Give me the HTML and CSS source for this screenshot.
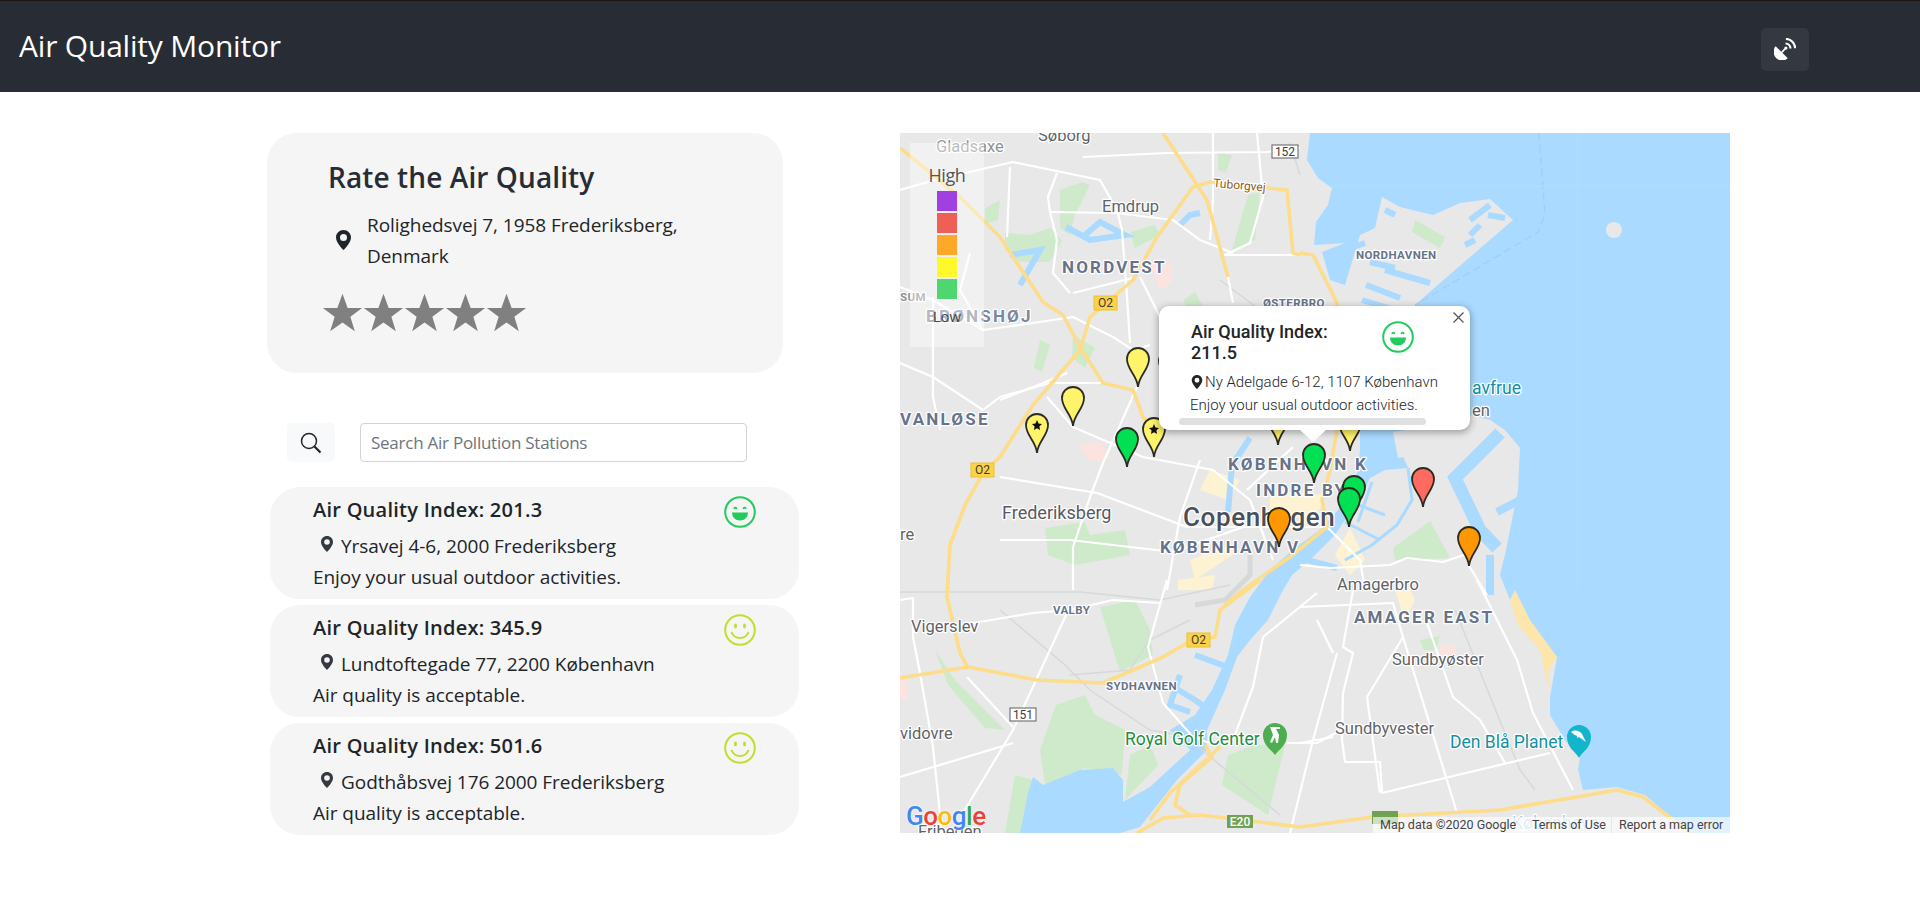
FILE: index.html
```html
<!DOCTYPE html>
<html lang="en">
<head>
    <meta charset="UTF-8">
    <title>Air Quality Monitor</title>
    <link rel="stylesheet" href="styles.css">
</head>
<body>
    <svg class="sprites" width="0" height="0">
        <defs>
            <symbol id="icon-pin" viewBox="0 0 12 16">
                <path fill-rule="evenodd" d="M6 0C2.7 0 0 2.6 0 5.9 0 9.6 4.4 14.300 6 16c1.600-1.700 6-6.400 6-10.100C12 2.600 9.300 0 6 0zm0 3.200a2.800 2.800 0 1 1 0 5.600 2.800 2.800 0 0 1 0-5.600z"/>
            </symbol>
            <symbol id="face-grin" viewBox="0 0 32 32">
                <circle cx="16" cy="16" r="14.800" fill="none" stroke="currentColor" stroke-width="2"/>
                <path d="M10 13c.4-1.800 2.400-1.800 2.800 0M19.200 13c.4-1.800 2.400-1.800 2.800 0" fill="none" stroke="currentColor" stroke-width="1.600"/>
                <path d="M8 16.500h16c0 4.800-3.500 8-8 8s-8-3.200-8-8z" fill="currentColor"/>
            </symbol>
            <symbol id="face-smile" viewBox="0 0 32 32">
                <circle cx="16" cy="16" r="14.800" fill="none" stroke="currentColor" stroke-width="2"/>
                <ellipse cx="11.500" cy="12" rx="1.500" ry="2.400" fill="currentColor"/>
                <ellipse cx="20.500" cy="12" rx="1.500" ry="2.400" fill="currentColor"/>
                <path d="M7.500 18c1.500 4 4.500 6 8.500 6s7-2 8.500-6" fill="none" stroke="currentColor" stroke-width="2"/>
            </symbol>
            <path id="marker" d="M0 0C-1-12-11-17-11-28A11 11 0 1 1 11-28C11-17 1-12 0 0Z" stroke="#2b2b20" stroke-width="1.800"/>
            <polygon id="marker-star" points="0,-33 1.500,-29.500 5,-29 2.400,-26.500 3,-23 0,-24.800 -3,-23 -2.400,-26.500 -5,-29 -1.500,-29.500" fill="#111"/>
        </defs>
    </svg>

    <header class="navbar">
        <span class="brand">Air Quality Monitor</span>
        <button class="nav-btn" type="button">
            <svg width="22" height="22" viewBox="0 0 20 20">
                <path d="M1.500 7.500A7.800 7.800 0 0 0 12.500 18.500Z" fill="#fff"/>
                <path d="M7 13l3.500-3.500" stroke="#fff" stroke-width="1.500"/>
                <circle cx="10.800" cy="9.200" r="1.400" fill="#fff"/>
                <path d="M10.500 5A4.700 4.700 0 0 1 15 9.500M10.800.9A8.400 8.400 0 0 1 19.200 9.300" fill="none" stroke="#fff" stroke-width="2"/>
            </svg>
        </button>
    </header>

    <main class="page">
        <section class="side">
            <div class="rate-card">
                <h2>Rate the Air Quality</h2>
                <div class="rate-address">
                    <svg class="pin-lg"><use href="#icon-pin"/></svg>
                    <p>Rolighedsvej 7, 1958 Frederiksberg, Denmark</p>
                </div>
                <div class="stars">
                    <svg viewBox="0 0 24 24"><polygon points="12,1 15,9.300 23.500,9.300 16.600,14.500 19.200,23 12,17.800 4.800,23 7.400,14.500 .5,9.300 9,9.300"/></svg>
                    <svg viewBox="0 0 24 24"><polygon points="12,1 15,9.300 23.500,9.300 16.600,14.500 19.200,23 12,17.800 4.800,23 7.400,14.500 .5,9.300 9,9.300"/></svg>
                    <svg viewBox="0 0 24 24"><polygon points="12,1 15,9.300 23.500,9.300 16.600,14.500 19.200,23 12,17.800 4.800,23 7.400,14.500 .5,9.300 9,9.300"/></svg>
                    <svg viewBox="0 0 24 24"><polygon points="12,1 15,9.300 23.500,9.300 16.600,14.500 19.200,23 12,17.800 4.800,23 7.400,14.500 .5,9.300 9,9.300"/></svg>
                    <svg viewBox="0 0 24 24"><polygon points="12,1 15,9.300 23.500,9.300 16.600,14.500 19.200,23 12,17.800 4.800,23 7.400,14.500 .5,9.300 9,9.300"/></svg>
                </div>
            </div>

            <div class="search">
                <button class="search-btn" type="button">
                    <svg width="22" height="22" viewBox="0 0 22 22" fill="none" stroke="#212529">
                        <circle cx="9" cy="9" r="7.500" stroke-width="1.500"/>
                        <path d="M14.500 14.500l6 6" stroke-width="2.200"/>
                    </svg>
                </button>
                <input type="text" placeholder="Search Air Pollution Stations">
            </div>

            <div class="station">
                <div class="station-info">
                    <h3>Air Quality Index: 201.3</h3>
                    <div class="station-address"><svg class="pin-sm"><use href="#icon-pin"/></svg>Yrsavej 4-6, 2000 Frederiksberg</div>
                    <p>Enjoy your usual outdoor activities.</p>
                </div>
                <svg class="face good"><use href="#face-grin"/></svg>
            </div>
            <div class="station">
                <div class="station-info">
                    <h3>Air Quality Index: 345.9</h3>
                    <div class="station-address"><svg class="pin-sm"><use href="#icon-pin"/></svg>Lundtoftegade 77, 2200 København</div>
                    <p>Air quality is acceptable.</p>
                </div>
                <svg class="face ok"><use href="#face-smile"/></svg>
            </div>
            <div class="station">
                <div class="station-info">
                    <h3>Air Quality Index: 501.6</h3>
                    <div class="station-address"><svg class="pin-sm"><use href="#icon-pin"/></svg>Godthåbsvej 176 2000 Frederiksberg</div>
                    <p>Air quality is acceptable.</p>
                </div>
                <svg class="face ok"><use href="#face-smile"/></svg>
            </div>
        </section>

        <section class="map">
            <svg class="map-art" viewBox="900 133 830 700" width="830" height="700">
                <rect class="water" x="900" y="133" width="830" height="700"/>

                <!-- land -->
                <polygon class="land" points="900,133 1310,133 1307,160 1318,178 1332,188 1328,205 1316,222 1314,245 1345,243 1322,252 1330,280 1345,285 1360,235 1375,228 1382,197 1400,207 1433,215 1460,203 1490,199 1513,220 1440,283 1415,305 1400,330 1450,400 1470,415 1490,420 1505,430 1520,448 1518,490 1506,550 1500,575 1510,600 1530,625 1557,657 1550,697 1550,715 1565,740 1580,757 1578,770 1583,790 1617,787 1645,795 1690,833 900,833"/>
                <ellipse class="land" cx="1614" cy="230" rx="8" ry="8"/>

                <!-- parks -->
                <g class="park">
                    <polygon points="1005,233 1030,235 1050,228 1062,240 1050,262 1020,262 1005,250"/>
                    <polygon points="1060,190 1082,182 1090,185 1075,215 1070,235 1060,228"/>
                    <polygon points="1130,232 1155,225 1160,235 1135,248"/>
                    <polygon points="1183,300 1195,292 1205,310 1193,318"/>
                    <polygon points="1218,152 1232,155 1226,172 1218,170"/>
                    <polygon points="1248,195 1260,192 1255,240 1232,250"/>
                    <polygon points="985,208 1000,200 998,220 985,224"/>
                    <polygon points="1073,335 1095,348 1085,368 1072,358"/>
                    <polygon points="1040,340 1050,345 1042,372 1034,368"/>
                    <polygon points="1415,220 1445,237 1440,248 1412,232"/>
                    <polygon points="1045,528 1085,522 1090,535 1125,530 1130,555 1075,565 1048,555"/>
                    <polygon points="1100,607 1135,600 1150,630 1153,655 1120,672"/>
                    <polygon points="1056,705 1085,695 1095,715 1125,730 1122,775 1085,768 1045,785 1040,750"/>
                    <polygon points="1130,755 1150,745 1158,765 1125,800"/>
                    <polygon points="1015,775 1033,780 1025,833 1005,833"/>
                    <polygon points="1228,755 1255,745 1285,745 1268,815 1222,785"/>
                    <polygon points="1430,521 1450,558 1395,560 1393,548"/>
                    <polygon points="935,650 955,680 1005,730 985,728 948,685"/>
                    <polygon points="1420,640 1440,636 1436,650 1424,650"/>
                </g>

                <!-- hospital and built-up patches -->
                <g class="pink">
                    <polygon points="1150,265 1172,262 1172,282 1160,290"/>
                    <polygon points="1078,445 1100,440 1110,458 1090,462"/>
                    <polygon points="900,680 908,678 908,700 900,700"/>
                    <polygon points="1440,645 1455,645 1457,655 1440,655"/>
                </g>
                <g class="town">
                    <polygon points="1178,580 1215,575 1212,590 1178,590"/>
                    <polygon points="1210,470 1240,480 1228,500 1200,490"/>
                    <polygon points="1270,490 1325,495 1315,520 1270,515"/>
                    <polygon points="1190,560 1230,545 1240,550 1195,580"/>
                    <polygon points="1335,555 1350,528 1365,560 1350,575"/>
                    <polygon points="1240,340 1262,332 1264,345 1244,352"/>
                    <polygon points="1395,590 1405,580 1415,600 1405,620"/>
                </g>
                <polygon class="sand" points="1510,600 1515,590 1530,620 1557,657 1548,672 1550,690 1545,675 1540,650 1518,625"/>

                <!-- harbour and canals -->
                <polygon class="water" points="1360,425 1410,425 1396,440 1408,468 1385,470 1370,478 1360,500 1345,520 1335,535 1310,560 1292,575 1283,590 1268,620 1250,640 1237,657 1225,690 1207,730 1207,750 1177,780 1140,827 1120,833 1020,833 1028,793 1033,777 1043,785 1080,770 1113,768 1123,780 1123,802 1150,787 1190,750 1170,730 1195,715 1212,690 1228,655 1235,625 1250,597 1270,570 1295,548 1320,530 1338,510 1352,490 1358,470 1360,450"/>
                <polygon class="land" points="1393,432 1408,430 1410,456 1398,458"/>
                <g class="canal">
                    <path d="M1250 438L1232 465 1228 512"/>
                    <path d="M1307 560L1337 568"/>
                    <path d="M1170 685L1195 700 1212 712M1195 655L1230 668M1180 675L1170 705 1190 712"/>
                    <path d="M1066 227L1090 240 1125 235 1100 222 1085 235M1010 255L1040 250 1020 285"/>
                    <path d="M1200 213L1190 215 1180 225"/>
                </g>
                <path class="canal-thin" d="M1408 468L1412 500 1397 525 1372 545 1345 560M1345 500L1385 515M1372 482L1358 522M1345 522L1380 540"/>
                <path class="canal-wide" d="M1500 433L1455 478 1480 530 1497 548"/>
                <path class="canal-mid" d="M1530 495L1497 512M1490 555V595"/>
                <g class="dock">
                    <path d="M1385 210L1395 215M1370 262L1395 268M1385 270L1430 283M1366 285L1400 298M1362 300L1395 310M1470 220L1490 205M1470 235L1480 225M1465 245L1475 240M1488 215L1505 218M1345 250L1365 243"/>
                </g>
                <path class="lane" d="M1539 133L1545 215 1538 232 1415 305"/>
                <path class="grid" d="M1578 133V590M1330 186H1730"/>

                <!-- rail -->
                <g class="rail">
                    <path d="M900 592H1080L1160 600 1230 585M1000 610L1065 665 1090 690 1150 730 1190 737M1190 620L1150 640 1130 670 1070 675M1190 740L1280 815M1455 610L1520 770 1535 790M1290 143L1300 175M1220 280L1260 310 1300 300"/>
                    <path class="rail-wide" d="M1250 555L1250 575 1225 600 1195 605"/>
                </g>

                <!-- streets -->
                <g class="road">
                    <path d="M1083 157L1167 153 1267 152 1300 148"/>
                    <path d="M900 190L935 180 1013 162 1100 180 1117 210 1122 230 1127 297 1130 343"/>
                    <path d="M1010 167L1007 237"/>
                    <path d="M1050 212L1117 213 1173 220 1200 240 1233 253"/>
                    <path d="M1057 173L1048 197 1050 212 1057 240 1053 273 1070 293"/>
                    <path d="M1073 293L1133 278"/>
                    <path d="M900 287L933 300 983 330 1033 323 1073 317 1113 337 1133 350 1150 345"/>
                    <path d="M900 363L933 377 983 410 1000 397 1050 383 1107 383"/>
                    <path d="M933 297V397L940 430"/>
                    <path d="M970 253L960 290 983 330"/>
                    <path d="M1140 277L1160 317 1163 343"/>
                    <path d="M1213 133V200L1210 240"/>
                    <path d="M1257 133L1263 197 1250 243 1225 255"/>
                    <path d="M1223 255H1300"/>
                    <path d="M1228 277L1233 303"/>
                    <path d="M1000 400L1043 383 1067 373"/>
                    <path d="M1047 397L1073 427 1143 457 1213 470 1250 500 1273 560"/>
                    <path d="M1137 387L1103 463 1090 497 1073 547V590"/>
                    <path d="M1000 477L1097 493 1187 527 1243 527"/>
                    <path d="M1000 540H1070L1173 552 1243 527 1327 527 1360 560 1365 590"/>
                    <path d="M1300 565L1330 568 1390 565 1407 558 1443 562 1470 553"/>
                    <path d="M1469 566L1487 595"/>
                    <path d="M1200 460L1180 517 1167 590"/>
                    <path d="M1293 447L1247 490"/>
                    <path d="M900 600L913 598V637L920 673 933 747 942 833"/>
                    <path d="M900 777L1013 743"/>
                    <path d="M973 623L1033 613 1070 610 1113 600 1160 603"/>
                    <path d="M1167 580L1148 647 1163 703 1193 737 1215 745"/>
                    <path d="M1067 613L1013 730 963 813"/>
                    <path d="M967 677L1013 727"/>
                    <path d="M1317 593L1263 637 1253 687 1233 740"/>
                    <path d="M1337 653L1313 740 1290 833"/>
                    <path d="M1287 743H1317L1347 727"/>
                    <path d="M1317 620L1333 653"/>
                    <path d="M1353 590L1343 647 1353 653 1343 693 1342 740 1345 762H1380L1382 793"/>
                    <path d="M1403 637L1457 813"/>
                    <path d="M1403 637L1367 697 1380 793"/>
                    <path d="M1427 623L1453 697 1480 720 1505 763"/>
                    <path d="M1477 580L1517 660 1533 713 1573 790"/>
                    <path d="M1300 743L1333 737"/>
                    <path d="M1382 793L1550 753"/>
                    <path d="M1300 607L1393 603 1403 637"/>
                </g>

                <!-- motorways -->
                <g class="art">
                    <path d="M900 148L960 197 1000 237 1017 263 1043 302 1063 315 1080 347 1103 383 1133 390 1143 417 1157 430"/>
                    <path d="M985 470L1000 457 1033 405 1080 350 1090 317 1133 280 1157 237 1193 187 1210 182 1287 190 1293 253 1300 255"/>
                    <path d="M1163 133L1207 200 1228 277"/>
                    <path d="M985 470L965 505 950 545 947 597 960 653 968 668"/>
                    <path d="M900 678L968 667 1037 680 1103 683 1163 657 1187 643 1215 637 1220 610 1260 580"/>
                    <path d="M1300 253L1313 255 1337 303V430L1330 470 1322 500 1327 527 1290 557 1243 590 1225 605"/>
                    <path d="M1137 833L1163 818 1200 815 1267 823 1300 827 1373 817 1500 810 1577 797 1617 790 1643 797 1690 833"/>
                    <path d="M1220 747L1170 793 1150 820M1205 745L1212 757 1180 785 1175 805 1190 815"/>
                </g>

                <!-- road shields -->
                <g class="shield-y">
                    <rect x="1094" y="296" width="23" height="14"/>
                    <rect x="971" y="463" width="23" height="14"/>
                    <rect x="1187" y="633" width="23" height="14"/>
                </g>
                <g class="shield-y-text">
                    <text x="1105.500" y="307">O2</text>
                    <text x="982.500" y="474">O2</text>
                    <text x="1198.500" y="644">O2</text>
                </g>
                <rect class="shield-w" x="1272" y="145" width="26" height="13"/>
                <text class="shield-y-text" x="1285" y="156">152</text>
                <rect class="shield-w" x="1010" y="708" width="26" height="13"/>
                <text class="shield-y-text" x="1023" y="719">151</text>
                <rect class="shield-g" x="1227" y="815" width="26" height="13"/>
                <text class="shield-g-text" x="1240" y="826">E20</text>
                <rect class="shield-g" x="1372" y="811" width="26" height="13"/>

                <!-- place names -->
                <g class="place">
                    <text x="936" y="152" class="faded">Gladsaxe</text>
                    <text x="1038" y="141">Søborg</text>
                    <text x="1102" y="212">Emdrup</text>
                    <text x="1337" y="590">Amagerbro</text>
                    <text x="1392" y="665">Sundbyøster</text>
                    <text x="1335" y="734">Sundbyvester</text>
                    <text x="911" y="632">Vigerslev</text>
                    <text x="900" y="739">vidovre</text>
                    <text x="900" y="540">re</text>
                    <text x="918" y="837">Fribegen</text>
                    <text x="1472" y="416">en</text>
                    <text x="1002" y="519" class="mid">Frederiksberg</text>
                </g>
                <g class="district">
                    <text x="1062" y="273">NORDVEST</text>
                    <text x="926" y="322" class="under">BRØNSHØJ</text>
                    <text x="900" y="425">VANLØSE</text>
                    <text x="1228" y="470">KØBENHAVN K</text>
                    <text x="1256" y="496">INDRE BY</text>
                    <text x="1160" y="553">KØBENHAVN V</text>
                    <text x="1354" y="623">AMAGER EAST</text>
                </g>
                <g class="hood">
                    <text x="1263" y="307">ØSTERBRO</text>
                    <text x="1356" y="259">NORDHAVNEN</text>
                    <text x="1053" y="614">VALBY</text>
                    <text x="1106" y="690">SYDHAVNEN</text>
                    <text x="900" y="301" class="faded">SUM</text>
                </g>
                <text class="city" x="1183" y="526">Copenhagen</text>
                <text class="tubor" x="1213" y="187" transform="rotate(5 1213 187)">Tuborgvej</text>
                <text class="poi green" x="1125" y="745">Royal Golf Center</text>
                <text class="poi teal" x="1450" y="748">Den Blå Planet</text>
                <text class="poi teal" x="1472" y="394">avfrue</text>
                <text class="poi faint" x="1512" y="829">København</text>

                <!-- poi pins -->
                <path class="poi-green" d="M1275 755C1272 750 1263 746 1263 735A12 12 0 1 1 1287 735C1287 746 1278 750 1275 755Z"/>
                <path class="poi-mark" d="M1270 727h10v2h-4l3 6-1 8h-2l-1-6-3 6-2-1 3-7z"/>
                <path class="poi-teal" d="M1579 758C1576 752 1567 748 1567 737A12 12 0 1 1 1591 737C1591 748 1582 752 1579 758Z"/>
                <path class="poi-mark" d="M1571 732c4-3 9-1 11 2l4 8c-3-2-5-4-7-5l-2 1 0-2c-2-1-4-2-6-4z"/>

                <!-- air quality markers -->
                <g class="pins">
                    <g transform="translate(1170 389)"><use href="#marker" fill="#fff36b"/></g>
                    <g transform="translate(1138 387)"><use href="#marker" fill="#fff36b"/></g>
                    <g transform="translate(1073 426)"><use href="#marker" fill="#fff36b"/></g>
                    <g transform="translate(1037 453)"><use href="#marker" fill="#fff36b"/><use href="#marker-star"/></g>
                    <g transform="translate(1127 467)"><use href="#marker" fill="#00e052"/></g>
                    <g transform="translate(1154 457)"><use href="#marker" fill="#fff36b"/><use href="#marker-star"/></g>
                    <g transform="translate(1278 445)"><use href="#marker" fill="#fff36b"/></g>
                    <g transform="translate(1350 451)"><use href="#marker" fill="#fff36b"/></g>
                    <g transform="translate(1314 483)"><use href="#marker" fill="#00e052"/></g>
                    <g transform="translate(1354 515)"><use href="#marker" fill="#00e052"/></g>
                    <g transform="translate(1349 527)"><use href="#marker" fill="#00e052"/></g>
                    <g transform="translate(1423 507)"><use href="#marker" fill="#ff6b60"/></g>
                    <g transform="translate(1279 547)"><use href="#marker" fill="#ff9800"/></g>
                    <g transform="translate(1469 566)"><use href="#marker" fill="#ff9800"/></g>
                </g>
            </svg>

            <div class="legend">
                <span class="legend-high">High</span>
                <i class="swatch s1"></i>
                <i class="swatch s2"></i>
                <i class="swatch s3"></i>
                <i class="swatch s4"></i>
                <i class="swatch s5"></i>
                <span class="legend-low">Low</span>
            </div>

            <div class="popup">
                <svg class="popup-close" width="11" height="11" viewBox="0 0 11 11"><path d="M.5.5l10 10M10.500.5l-10 10" stroke="#555" stroke-width="1.300"/></svg>
                <div class="popup-head">
                    <h4>Air Quality Index:<br>211.5</h4>
                    <svg class="face good"><use href="#face-grin"/></svg>
                </div>
                <div class="popup-address"><svg class="pin-pop"><use href="#icon-pin"/></svg>Ny Adelgade 6-12, 1107 København</div>
                <p>Enjoy your usual outdoor activities.</p>
                <div class="popup-scroll"></div>
            </div>

            <div class="google"><span class="g-b">G</span><span class="g-r">o</span><span class="g-y">o</span><span class="g-b">g</span><span class="g-g">l</span><span class="g-r">e</span></div>

            <div class="map-credits">
                <span class="credit-data">Map data ©2020 Google</span>
                <span class="credit-terms">Terms of Use</span>
                <span class="credit-error">Report a map error</span>
            </div>
        </section>
    </main>
</body>
</html>
```

FILE: styles.css
```css
* {
    margin: 0;
    padding: 0;
    box-sizing: border-box;
}
body {
    background: #fff;
    color: #212529;
    font-family: "Open Sans", sans-serif;
    height: 907px;
    overflow: hidden;
}
.sprites {
    position: absolute;
}

/* navbar */
.navbar {
    height: 92px;
    background: #282c34;
    border-top: 1px solid #1d1418;
    display: flex;
    align-items: center;
    justify-content: space-between;
    padding: 0 111px 0 19px;
}
.brand {
    color: #fff;
    font-size: 30px;
    letter-spacing: -0.2px;
    margin-top: -3px;
}
.nav-btn {
    width: 48px;
    height: 43px;
    margin-top: 5px;
    background: #343840;
    border: none;
    border-radius: 5px;
    display: flex;
    align-items: center;
    justify-content: center;
}

/* left column */
.page {
    display: flex;
    gap: 101px;
    padding: 41px 0 0 267px;
}
.side {
    width: 532px;
}
.rate-card {
    width: 516px;
    height: 240px;
    padding: 27px 0 0 61px;
    background: #f5f5f5;
    border-radius: 30px;
}
.rate-card h2 {
    font-size: 28px;
    line-height: 34px;
    font-weight: 600;
    letter-spacing: .1px;
    color: #282c34;
}
.rate-address {
    display: flex;
    align-items: center;
    margin-top: 16px;
}
.rate-address p {
    width: 340px;
    margin-left: 16px;
    font-size: 19px;
    line-height: 31px;
    letter-spacing: -0.05px;
}
.pin-lg {
    width: 15px;
    height: 20px;
    margin: -2px 0 0 8px;
    fill: #212529;
}
.stars {
    display: flex;
    margin: 20px 0 0 -6px;
}
.stars svg {
    width: 41px;
    height: 41px;
    fill: #808080;
}

/* search */
.search {
    display: flex;
    gap: 25px;
    margin: 50px 0 25px 20px;
}
.search-btn {
    width: 48px;
    height: 39px;
    background: #f8f9fa;
    border: none;
    border-radius: 5px;
    display: flex;
    align-items: center;
    justify-content: center;
}
.search input {
    width: 387px;
    height: 39px;
    padding: 0 10px;
    border: 1px solid #ced4da;
    border-radius: 4px;
    font-family: inherit;
    font-size: 17px;
    letter-spacing: -0.25px;
    color: #495057;
}
.search input::placeholder {
    color: #6c757d;
    opacity: 1;
}

/* station list */
.station {
    display: flex;
    justify-content: space-between;
    width: 529px;
    height: 112px;
    margin: 0 0 6px 3px;
    padding: 9px 43px 0 43px;
    background: #f5f5f5;
    border-radius: 30px;
}
.station h3 {
    font-size: 20px;
    line-height: 27px;
    font-weight: 600;
    letter-spacing: .25px;
}
.station-address {
    display: flex;
    align-items: center;
    margin: 10px 0 0 8px;
    font-size: 19px;
    line-height: 26px;
    letter-spacing: -0.05px;
}
.pin-sm {
    width: 12px;
    height: 16px;
    margin: -4px 8px 0 0;
    fill: #343a40;
}
.station p {
    margin-top: 5px;
    font-size: 19px;
    line-height: 26px;
    letter-spacing: -0.05px;
}
.face {
    width: 32px;
    height: 32px;
    flex: none;
}
.good {
    color: #22cc5c;
}
.ok {
    color: #c4dc2c;
}

/* map */
.map {
    position: relative;
    width: 830px;
    height: 700px;
    overflow: hidden;
}
.map-art {
    display: block;
}
.map-art text {
    font-family: Roboto, sans-serif;
}
.land {
    fill: #e8e8e8;
}
.water {
    fill: #aadaff;
}
.park polygon {
    fill: #cfeacb;
}
.pink polygon {
    fill: #fbe3e0;
}
.town polygon {
    fill: #fdf3d3;
}
.sand {
    fill: #fde6ac;
}
.canal path {
    fill: none;
    stroke: #aadaff;
    stroke-width: 6;
}
.canal-thin {
    fill: none;
    stroke: #aadaff;
    stroke-width: 3;
}
.canal-wide {
    fill: none;
    stroke: #aadaff;
    stroke-width: 13;
}
.canal-mid {
    fill: none;
    stroke: #aadaff;
    stroke-width: 8;
}
.dock path {
    fill: none;
    stroke: #aadaff;
    stroke-width: 6;
}
.lane {
    fill: none;
    stroke: #9fcdf6;
    stroke-width: 1.200;
    stroke-dasharray: 8 4;
}
.grid {
    fill: none;
    stroke: #b5def9;
    stroke-width: 1;
}
.rail path {
    fill: none;
    stroke: #d6d8da;
    stroke-width: 1.500;
}
.rail .rail-wide {
    stroke-width: 5;
}
.road path {
    fill: none;
    stroke: #fff;
    stroke-width: 2.200;
    stroke-linejoin: round;
}
.art path {
    fill: none;
    stroke: #fddc8a;
    stroke-width: 3.600;
    stroke-linejoin: round;
}
.shield-y rect {
    fill: #fbd34a;
    stroke: #edbf2e;
}
.shield-y-text text, text.shield-y-text {
    font-size: 12px;
    fill: #3c3c3c;
    text-anchor: middle;
}
.shield-w {
    fill: #fff;
    stroke: #777;
    stroke-width: 1.200;
}
.shield-g {
    fill: #6fa353;
}
.shield-g-text {
    font-size: 12px;
    font-weight: 500;
    fill: #fff;
    text-anchor: middle;
}
.place text, .district text, .hood text, .city, .tubor, .poi {
    paint-order: stroke;
    stroke: #fff;
    stroke-width: 2.500px;
    stroke-linejoin: round;
}
.place text {
    font-size: 16.500px;
    fill: #5f6368;
}
.place .mid {
    font-size: 18px;
    fill: #565a66;
}
.place .faded, .hood .faded {
    fill: #8e9297;
}
.district text {
    font-size: 17px;
    font-weight: 700;
    letter-spacing: 2.200px;
    fill: #67738a;
}
.district .under {
    fill: #7c879b;
}
.hood text {
    font-size: 11.500px;
    font-weight: 700;
    letter-spacing: .4px;
    fill: #67738a;
}
.city {
    font-size: 26px;
    font-weight: 500;
    letter-spacing: .6px;
    fill: #4a4f58;
}
.tubor {
    font-size: 12px;
    fill: #8b6017;
}
.poi {
    font-size: 17.500px;
}
.green {
    fill: #1e8e3e;
}
.teal {
    fill: #12909f;
}
.faint {
    fill: #9fcbe6;
}
.poi-green {
    fill: #4cae4f;
}
.poi-teal {
    fill: #12b5cb;
}
.poi-mark {
    fill: #fff;
}

/* legend */
.legend {
    position: absolute;
    left: 10px;
    top: 10px;
    width: 74px;
    height: 204px;
    background: rgba(255, 255, 255, 0.4);
    display: flex;
    flex-direction: column;
    align-items: center;
    gap: 2px;
    padding-top: 19px;
    font-family: "Open Sans", sans-serif;
    color: #555;
}
.legend-high {
    font-size: 18px;
    line-height: 26px;
    margin-bottom: 1px;
    letter-spacing: -0.4px;
}
.legend-low {
    font-size: 15px;
    line-height: 20px;
    margin-top: 5px;
    color: #444;
}
.swatch {
    width: 20px;
    height: 20px;
}
.s1 { background: #a040e0; }
.s2 { background: #ef5f55; }
.s3 { background: #ffa726; }
.s4 { background: #fdf92a; }
.s5 { background: #4fd672; }

/* info window */
.popup {
    position: absolute;
    left: 259px;
    top: 173px;
    width: 311px;
    height: 124px;
    padding: 15px 0 0 32px;
    background: #fff;
    border-radius: 10px;
    box-shadow: 0 2px 7px 1px rgba(0, 0, 0, 0.3);
    font-family: Roboto, sans-serif;
}
.popup::after {
    content: "";
    position: absolute;
    left: 141px;
    bottom: -12px;
    border-top: 12px solid #fff;
    border-left: 13px solid transparent;
    border-right: 13px solid transparent;
}
.popup-close {
    position: absolute;
    right: 6px;
    top: 6px;
}
.popup-head {
    display: flex;
}
.popup h4 {
    width: 191px;
    font-size: 18px;
    line-height: 21px;
    font-weight: 500;
}
.popup-address {
    display: flex;
    align-items: center;
    margin-top: 9px;
    font-size: 15px;
    line-height: 20px;
    font-weight: 300;
    white-space: nowrap;
}
.pin-pop {
    width: 12px;
    height: 14px;
    margin-right: 2px;
    fill: #212529;
}
.popup p {
    margin: 3px 0 0 -1px;
    font-size: 15px;
    line-height: 20px;
    font-weight: 300;
}
.popup-scroll {
    width: 247px;
    height: 7px;
    margin: 3px 0 0 -12px;
    background: #e0e0e0;
    border-radius: 4px;
}

/* google bits */
.google {
    position: absolute;
    left: 6px;
    bottom: 1px;
    font-family: Roboto, sans-serif;
    font-size: 26px;
    line-height: 32px;
    font-weight: 500;
    letter-spacing: -0.5px;
    text-shadow: 0 0 2px #fff, 0 0 2px #fff;
}
.g-b { color: #4285f4; }
.g-r { color: #ea4335; }
.g-y { color: #fbbc05; }
.g-g { color: #34a853; }
.map-credits {
    position: absolute;
    right: 0;
    bottom: 0;
    width: 357px;
    height: 16px;
    display: flex;
    background: rgba(255, 255, 255, 0.65);
    font-family: Roboto, sans-serif;
    font-size: 12.500px;
    line-height: 16px;
    color: #444;
    white-space: nowrap;
}
.credit-data {
    margin-left: 7px;
    width: 152px;
}
.credit-terms {
    width: 80px;
    border-right: 1px solid #e6e6e6;
}
.credit-error {
    margin-left: 7px;
}
```
